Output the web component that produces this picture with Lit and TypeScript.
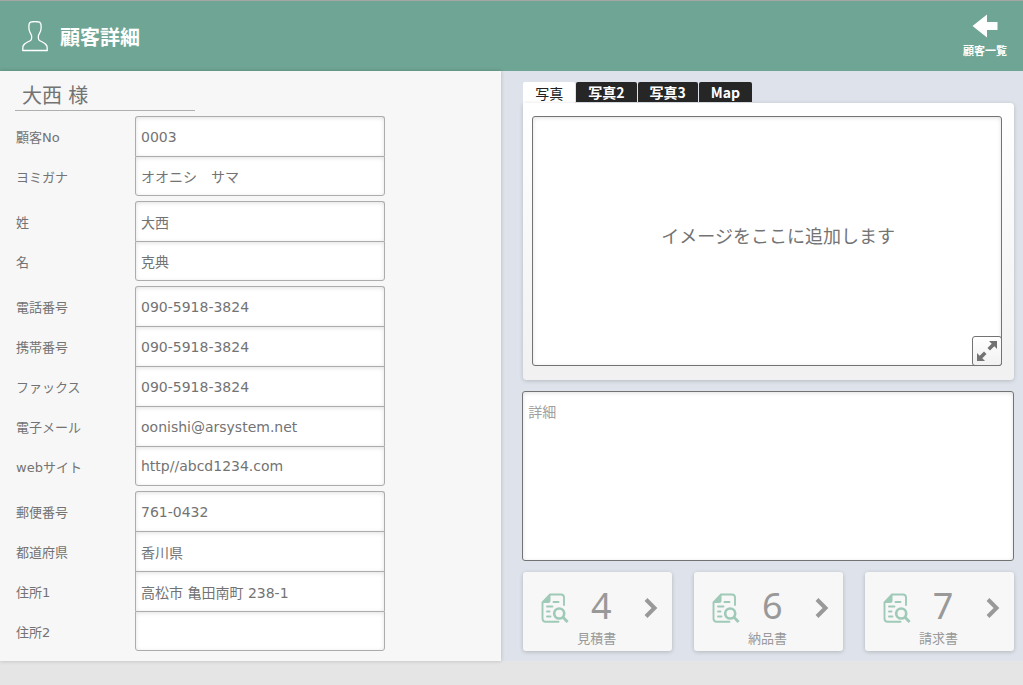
import { LitElement, html, css, svg } from "lit";
import { customElement, property, state } from "lit/decorators.js";

interface Field {
  id: string;
  label: string;
  value: string;
  type?: string;
}

const FIELD_GROUPS: Field[][] = [
  [
    { id: "no", label: "顧客No", value: "0003" },
    { id: "kana", label: "ヨミガナ", value: "オオニシ　サマ" },
  ],
  [
    { id: "family", label: "姓", value: "大西" },
    { id: "given", label: "名", value: "克典" },
  ],
  [
    { id: "tel", label: "電話番号", value: "090-5918-3824", type: "tel" },
    { id: "mobile", label: "携帯番号", value: "090-5918-3824", type: "tel" },
    { id: "fax", label: "ファックス", value: "090-5918-3824", type: "tel" },
    { id: "email", label: "電子メール", value: "oonishi@arsystem.net", type: "email" },
    { id: "web", label: "webサイト", value: "http//abcd1234.com" },
  ],
  [
    { id: "zip", label: "郵便番号", value: "761-0432" },
    { id: "pref", label: "都道府県", value: "香川県" },
    { id: "addr1", label: "住所1", value: "高松市 亀田南町 238-1" },
    { id: "addr2", label: "住所2", value: "" },
  ],
];

const TABS = ["写真", "写真2", "写真3", "Map"];

const DOCUMENTS = [
  { label: "見積書", count: 4 },
  { label: "納品書", count: 6 },
  { label: "請求書", count: 7 },
];

const personIcon = html`<svg width="26" height="31" viewBox="0 0 26 31" aria-hidden="true">
  ${svg`<path d="M8.5 1.2C10.5.6 15.5.6 17.5 1.2C19.3 2 19.4 4 19 8C18.8 11 17.3 12.5 16.600 14.2C16.2 16 16 18 17.2 19.2C19.5 21 24 21.8 25 25.2L25.3 29.5H.7L1 25.2C2 21.8 6.5 21 8.8 19.2C10 18 9.8 16 9.4 14.2C8.7 12.5 7.2 11 7 8C6.6 4 6.7 2 8.5 1.2Z" fill="none" stroke="#fff" stroke-width="1.3" stroke-linejoin="round"/>`}
</svg>`;

const backIcon = html`<svg width="26" height="24" viewBox="0 0 26 24" aria-hidden="true">
  <path d="M0.500 12L15 0.500V8H25.500V16H15V23.500Z" fill="#fff" />
</svg>`;

const expandIcon = html`<svg width="22" height="22" viewBox="0 0 22 22" aria-hidden="true">
  <g fill="#737373">
    <path d="M13 1H21V9L18.300 6.300L14 10.500L11.500 8L15.700 3.700Z" />
    <path d="M9 21H1V13L3.700 15.700L8 11.500L10.500 14L6.300 18.300Z" />
  </g>
</svg>`;

const documentIcon = html`<svg width="28" height="31" viewBox="0 0 28 31" aria-hidden="true">
  <g fill="none" stroke="#9fcab8" stroke-width="1.9" stroke-linecap="round">
    <path d="M23 12V4.500Q23 1.500 20 1.500H9L1.500 9.500V25.500Q1.500 28.700 4.500 28.700H17.500" />
    <path d="M12.500 9H17.500M6 13.500H11.500M6 18.500H8.500M6 23.500H9.500" />
  </g>
  <path d="M9.500 1V7.500Q9.500 10 7 10H1Z" fill="#9fcab8" />
  <circle cx="18.200" cy="20.500" r="5" fill="none" stroke="#9fcab8" stroke-width="2.600" />
  <path d="M22 24.300L26.600 29" stroke="#9fcab8" stroke-width="2.800" />
</svg>`;

const chevronIcon = html`<svg width="14" height="20" viewBox="0 0 14 20" aria-hidden="true">
  <path d="M2 1.500L10.500 10L2 18.500" fill="none" stroke="#999" stroke-width="4" />
</svg>`;

@customElement("document-card")
class DocumentCard extends LitElement {
  @property() label = "";
  @property({ type: Number }) count = 0;

  static styles = css`
    :host {
      display: block;
    }
    .card {
      display: flex;
      flex-direction: column;
      width: 100%;
      height: 79px;
      box-sizing: border-box;
      padding: 13px 14px 0 18px;
      border: 0;
      border-radius: 3px;
      background: #f7f7f7;
      box-shadow: 0 1px 4px rgba(0, 0, 0, 0.2);
      color: #999;
      font-family: inherit;
      cursor: pointer;
    }
    .top {
      display: flex;
      align-items: center;
      height: 46px;
    }
    .count {
      align-self: flex-start;
      width: 24px;
      margin-left: 20px;
      text-align: center;
      font-family: "Noto Sans", sans-serif;
      font-size: 36px;
      line-height: 42px;
    }
    .top svg:last-child {
      margin-left: auto;
    }
    .label {
      padding-right: 6px;
      text-align: center;
      font-size: 13px;
      line-height: 14px;
    }
    svg {
      display: block;
    }
  `;

  render() {
    return html`<button class="card" type="button">
      <span class="top">${documentIcon}<span class="count">${this.count}</span>${chevronIcon}</span>
      <span class="label">${this.label}</span>
    </button>`;
  }
}

@customElement("app-root")
class AppRoot extends LitElement {
  @state() private activeTab = 0;

  static styles = css`
    :host {
      display: flex;
      flex-direction: column;
      min-height: 100vh;
      background: #e5e5e5;
      color: #737373;
      font-family: "DejaVu Sans", "Noto Sans CJK JP", sans-serif;
      font-size: 14px;
    }
    svg {
      display: block;
    }
    .header {
      display: flex;
      align-items: center;
      box-sizing: border-box;
      height: 71px;
      padding: 0 16px 0 22px;
      border-top: 1px solid #a5a7a5;
      background: #6fa594;
      color: #fff;
      font-family: "Noto Sans CJK JP", sans-serif;
    }
    .title {
      flex: 1;
      margin: 0 0 0 12px;
      padding-top: 2px;
      font-size: 20px;
      line-height: 30px;
      font-weight: 700;
    }
    .back {
      display: flex;
      flex-direction: column;
      align-items: center;
      gap: 4px;
      color: #fff;
      font-size: 11px;
      line-height: 16px;
      font-weight: 700;
      text-decoration: none;
    }
    .main {
      display: grid;
      grid-template-columns: 49fr 51fr;
      background: #dee3eb;
    }
    .customer {
      padding: 10px 15px;
      background: #f7f7f7;
      box-shadow: 0 0 4px rgba(0, 0, 0, 0.2);
    }
    .name {
      box-sizing: border-box;
      width: 180px;
      height: 30px;
      margin: 0 0 5px;
      padding-left: 7px;
      border-bottom: 1px solid #b0b0b0;
      font-size: 20px;
      line-height: 30px;
      font-weight: 400;
    }
    .fields {
      display: flex;
      flex-direction: column;
      gap: 5px;
    }
    .row {
      display: grid;
      grid-template-columns: 120px minmax(0, 250px);
      height: 40px;
    }
    .row label {
      padding: 3px 0 0 1px;
      font-size: 13px;
      line-height: 38px;
    }
    .row input {
      box-sizing: border-box;
      width: 100%;
      height: 40px;
      padding: 0 5px;
      border: 1px solid #acacac;
      border-bottom-width: 0;
      border-radius: 0;
      outline: 0;
      background: #fff;
      box-shadow: inset 0 1px 4px rgba(0, 0, 0, 0.12);
      color: #737373;
      font: inherit;
    }
    .row:first-child input {
      border-top-left-radius: 3px;
      border-top-right-radius: 3px;
    }
    .row:last-child input {
      border-bottom-width: 1px;
      border-bottom-left-radius: 3px;
      border-bottom-right-radius: 3px;
    }
    .side {
      display: flex;
      flex-direction: column;
      min-width: 0;
      padding: 11px 9px 10px 22px;
      font-family: "Noto Sans CJK JP", sans-serif;
    }
    .tabs {
      display: flex;
      gap: 1px;
      height: 21px;
    }
    .tab {
      height: 20px;
      padding: 0 12px;
      border: 0;
      border-radius: 2px 2px 0 0;
      background: #262626;
      color: #fff;
      font-family: inherit;
      font-size: 14px;
      line-height: 20px;
      font-weight: 700;
      cursor: pointer;
    }
    .tab.active {
      height: 22px;
      background: #fff;
      color: #222;
      font-weight: 400;
      line-height: 22px;
    }
    .photos {
      padding: 13px 12px 14px 9px;
      border-radius: 0 4px 4px 4px;
      background: linear-gradient(#fff, #f1f1f1);
      box-shadow: 0 1px 4px rgba(0, 0, 0, 0.18);
    }
    .frame {
      position: relative;
      display: flex;
      align-items: center;
      justify-content: center;
      box-sizing: border-box;
      height: 250px;
      padding: 0 0 12px 22px;
      border: 1px solid #737373;
      border-radius: 3px;
      background: #fff;
      box-shadow: inset 0 1px 4px rgba(0, 0, 0, 0.12);
      font-size: 18px;
      line-height: 26px;
    }
    .expand {
      position: absolute;
      right: -1px;
      bottom: -1px;
      display: flex;
      align-items: center;
      justify-content: center;
      width: 30px;
      height: 30px;
      padding: 0;
      border: 1px solid #737373;
      border-radius: 3px;
      background: linear-gradient(#fff, #f1f1f1);
      cursor: pointer;
    }
    .notes {
      display: block;
      box-sizing: border-box;
      height: 170px;
      margin: 11px 0 11px -1px;
      padding: 9px 5px;
      border: 1px solid #737373;
      border-radius: 3px;
      outline: 0;
      background: #fff;
      box-shadow: inset 0 1px 4px rgba(0, 0, 0, 0.12);
      color: #737373;
      font-family: inherit;
      font-size: 14px;
      line-height: 20px;
      resize: none;
    }
    .notes::placeholder {
      color: #a0a0a0;
    }
    .documents {
      display: grid;
      grid-template-columns: repeat(3, 1fr);
      gap: 22px;
    }
  `;

  render() {
    return html`
      <header class="header">
        ${personIcon}
        <h1 class="title">顧客詳細</h1>
        <a class="back" href="#">${backIcon}<span>顧客一覧</span></a>
      </header>
      <main class="main">
        <section class="customer">
          <h2 class="name">大西 様</h2>
          <form class="fields">
            ${FIELD_GROUPS.map(
              (group) => html`<div class="group">
                ${group.map(
                  (field) => html`<div class="row">
                    <label for=${field.id}>${field.label}</label>
                    <input id=${field.id} type=${field.type ?? "text"} .value=${field.value} />
                  </div>`
                )}
              </div>`
            )}
          </form>
        </section>
        <section class="side">
          <div class="tabs" role="tablist">
            ${TABS.map(
              (tab, i) => html`<button
                class="tab ${i === this.activeTab ? "active" : ""}"
                type="button"
                role="tab"
                aria-selected=${i === this.activeTab ? "true" : "false"}
                @click=${() => (this.activeTab = i)}
              >${tab}</button>`
            )}
          </div>
          <div class="photos" role="tabpanel">
            <div class="frame">
              <span>イメージをここに追加します</span>
              <button class="expand" type="button" aria-label="拡大">${expandIcon}</button>
            </div>
          </div>
          <textarea class="notes" placeholder="詳細" aria-label="詳細"></textarea>
          <div class="documents">
            ${DOCUMENTS.map(
              (doc) => html`<document-card .label=${doc.label} .count=${doc.count}></document-card>`
            )}
          </div>
        </section>
      </main>
    `;
  }
}
